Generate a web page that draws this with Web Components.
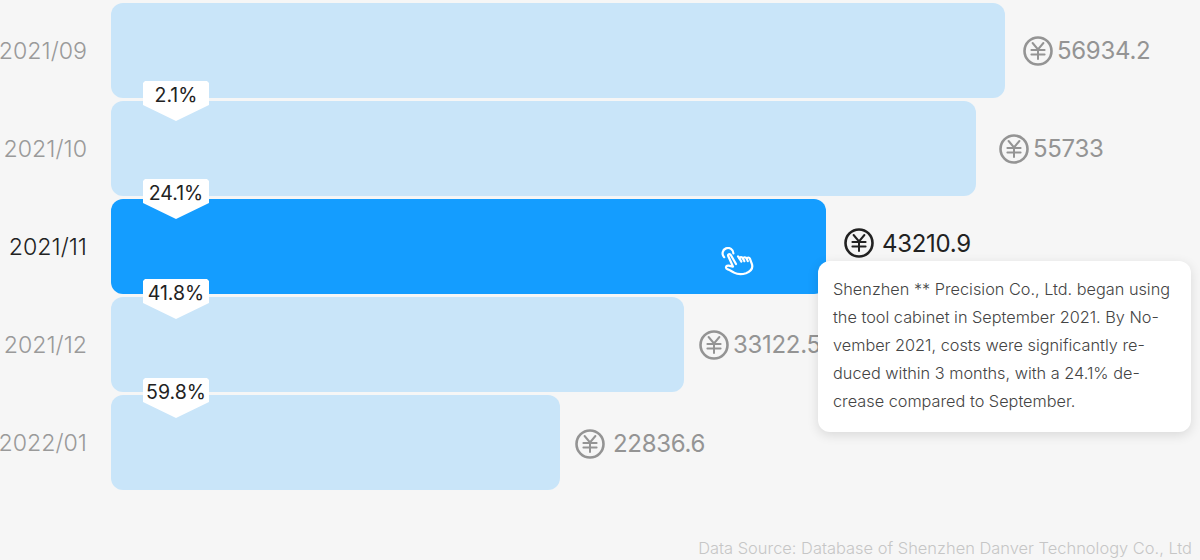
<!DOCTYPE html>
<html lang="en">
<head>
<meta charset="utf-8">
<title>Cost trend</title>
<style>
  html, body { margin: 0; height: 100%; }
  body { background: #f6f6f6; font-family: Inter, "Noto Sans", sans-serif; font-weight: 300; overflow: hidden; }
</style>
</head>
<body>
<cost-chart>
  <cost-row label="2021/09" amount="56934.2" bar="894" gap="18" text-gap="4"></cost-row>
  <cost-row label="2021/10" amount="55733" bar="865" gap="23" text-gap="4" change="2.1%" badge-top="-20"></cost-row>
  <cost-row label="2021/11" amount="43210.9" bar="715" gap="18" text-gap="8" change="24.1%" badge-top="-20" lift="7" active>
    <tap-cursor></tap-cursor>
  </cost-row>
  <cost-row label="2021/12" amount="33122.5" bar="573" gap="15" text-gap="4" change="41.8%" badge-top="-18"></cost-row>
  <cost-row label="2022/01" amount="22836.6" bar="449" gap="15" text-gap="8" change="59.8%" badge-top="-17" lift="-2"></cost-row>
  <note-card>Shenzhen ** Precision Co., Ltd. began using<br>the tool cabinet in September 2021. By No-<br>vember 2021, costs were significantly re-<br>duced within 3 months, with a 24.1% de-<br>crease compared to September.</note-card>
  <source-note slot="footer">Data Source: Database of Shenzhen Danver Technology Co., Ltd</source-note>
</cost-chart>

<script>
class CostChart extends HTMLElement {
  connectedCallback() {
    this.attachShadow({ mode: "open" });
    this.shadowRoot.innerHTML = `
<style>
  :host { display: block; position: relative; width: 1200px; height: 560px; box-sizing: border-box; padding-top: 3px; }
  .rows { display: flex; flex-direction: column; gap: 3px; }
</style>
<div class="rows"><slot></slot></div>
<slot name="footer"></slot>`;
  }
}

class YenIcon extends HTMLElement {
  connectedCallback() {
    this.attachShadow({ mode: "open" });
    this.shadowRoot.innerHTML = `
<style>
  :host { display: block; width: 30px; height: 30px; flex: none; }
  svg { display: block; }
</style>
<svg width="30" height="30" viewBox="0 0 30 30" fill="none" stroke="currentColor" stroke-linecap="round">
  <circle cx="15" cy="15" r="13.5" stroke-width="2.6"/>
  <path d="M9.6 7 15 13.4 20.4 7M8.4 14H21.6M8.4 18.4H21.6M15 13.4V23" stroke-width="2"/>
</svg>`;
  }
}

class ChangeBadge extends HTMLElement {
  connectedCallback() {
    this.attachShadow({ mode: "open" });
    this.shadowRoot.innerHTML = `
<style>
  :host { position: absolute; left: 32px; width: 66px; height: 40px; z-index: 2; display: block; }
  .tag {
    height: 100%; background: #fff; color: #222; font-size: 19.5px; font-weight: 400; line-height: 29px; text-align: center;
    clip-path: polygon(2px 0, 64px 0, 66px 2px, 66px 24px, 33px 40px, 0 24px, 0 2px);
  }
</style>
<div class="tag"><slot></slot></div>`;
  }
}

class TapCursor extends HTMLElement {
  connectedCallback() {
    this.attachShadow({ mode: "open" });
    this.shadowRoot.innerHTML = `
<style>
  :host { position: absolute; left: 609px; top: 48px; width: 34px; height: 30px; display: block; }
  svg { display: block; }
</style>
<svg width="34" height="30" viewBox="0 0 34 30" fill="none" stroke="#fff" stroke-width="2.2" stroke-linecap="round" stroke-linejoin="round">
  <path d="M4.2 10.2A5.4 5.4 0 1 1 13.4 6.4"/>
  <path d="M16 17 10.8 8C9.8 6.2 7.4 7.2 8.2 9L13 19.6 8.6 18.6C5.6 18.2 5 21.6 7.8 22.4 10 23 11.6 24.4 14 25.6 17.4 27.4 22 27.6 26 26.2 30.6 24.4 33 21 32 17.4L30 11.8C29.2 10 27.4 10.2 26.8 11.8 25.8 9.8 23.6 9.8 23 11.4 22 9.6 19.8 9.8 19.4 11.4L18 9.4"/>
  <path d="M19.4 11.4 21.4 14.6M23 11.4 24.4 14.2M26.8 11.8 27.8 14.2"/>
</svg>`;
  }
}

class CostRow extends HTMLElement {
  connectedCallback() {
    this.attachShadow({ mode: "open" });
    const active = this.hasAttribute("active");
    const change = this.getAttribute("change");
    this.shadowRoot.innerHTML = `
<style>
  :host { display: flex; align-items: center; height: 95px; color: ${active ? "#222" : "#949494"}; }
  .label { width: 87px; margin-right: 24px; display: flex; justify-content: flex-end; font-size: 23.2px; white-space: nowrap; color: ${active ? "#222" : "#9a9a9a"}; }
  .bar {
    position: relative; height: 95px; flex: none; border-radius: 12px;
    width: ${this.getAttribute("bar")}px;
    margin-right: ${this.getAttribute("gap")}px;
    background: ${active ? "#149dff" : "#c9e5f9"};
  }
  change-badge { top: ${this.getAttribute("badge-top") || -20}px; }
  .amount { display: flex; align-items: center; gap: ${this.getAttribute("text-gap")}px; margin-bottom: ${this.getAttribute("lift") || 0}px; font-size: 24px; font-weight: 400; letter-spacing: -.3px; white-space: nowrap; }
</style>
<div class="label">${this.getAttribute("label")}</div>
<div class="bar">
  ${change ? `<change-badge>${change}</change-badge>` : ""}
  <slot></slot>
</div>
<div class="amount"><yen-icon></yen-icon><span>${this.getAttribute("amount")}</span></div>`;
  }
}

class NoteCard extends HTMLElement {
  connectedCallback() {
    this.attachShadow({ mode: "open" });
    this.shadowRoot.innerHTML = `
<style>
  :host {
    position: absolute; left: 818px; top: 261px; width: 373px; height: 171px; box-sizing: border-box;
    padding: 14px 15px; background: #fff; border-radius: 12px; box-shadow: 0 3px 12px rgba(0, 0, 0, .12);
    color: #444; font-size: 16.3px; line-height: 28px; white-space: nowrap; z-index: 3; display: block;
  }
</style>
<slot></slot>`;
  }
}

class SourceNote extends HTMLElement {
  connectedCallback() {
    this.attachShadow({ mode: "open" });
    this.shadowRoot.innerHTML = `
<style>
  :host { display: block; margin-top: 46px; padding-right: 8px; text-align: right; color: #c6c6c6; font-size: 16.45px; line-height: 24px; white-space: nowrap; }
</style>
<slot></slot>`;
  }
}

customElements.define("cost-chart", CostChart);
customElements.define("yen-icon", YenIcon);
customElements.define("change-badge", ChangeBadge);
customElements.define("tap-cursor", TapCursor);
customElements.define("cost-row", CostRow);
customElements.define("note-card", NoteCard);
customElements.define("source-note", SourceNote);
</script>
</body>
</html>
